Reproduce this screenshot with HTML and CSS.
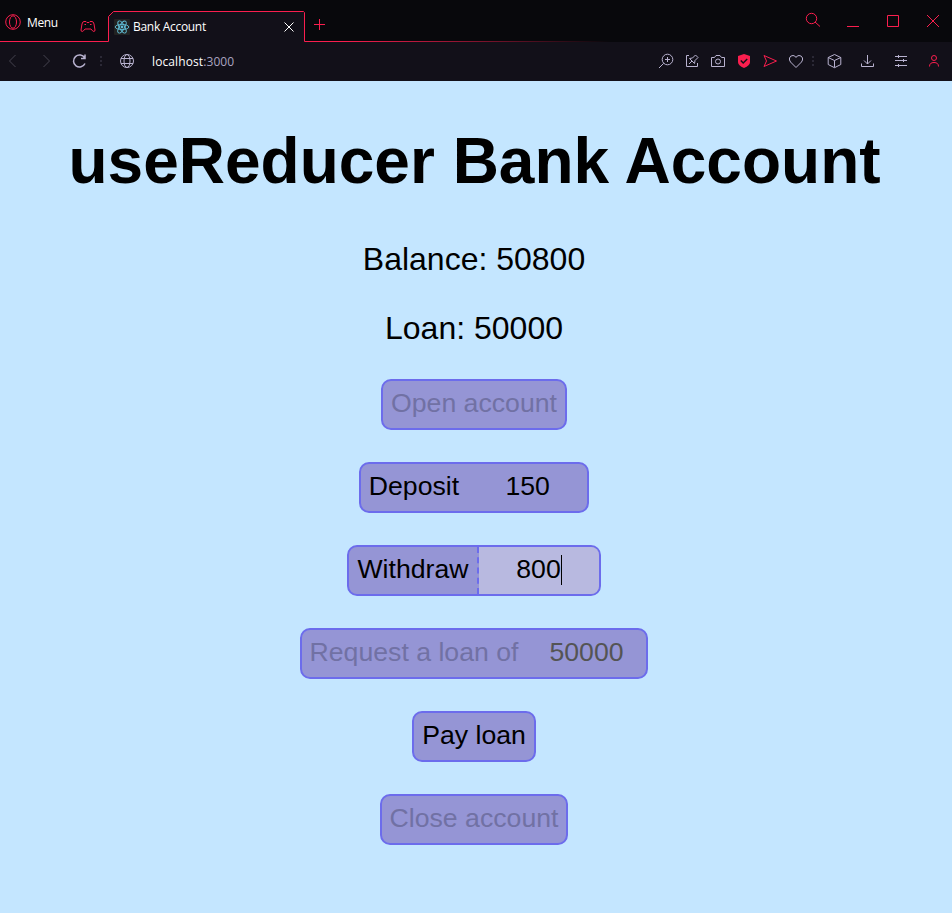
FILE: index.html
```html
<!DOCTYPE html>
<html lang="en">
<head>
<meta charset="utf-8">
<title>Bank Account</title>
<link rel="stylesheet" href="styles.css">
</head>
<body>
<header class="browser">
  <div class="tabbar">
    <svg class="outline" width="952" height="42" viewBox="0 0 952 42"><defs><linearGradient id="fade" gradientUnits="userSpaceOnUse" x1="0" x2="952" y1="0" y2="0"><stop offset="0" stop-color="#fa1e4e"/><stop offset=".36" stop-color="#fa1e4e"/><stop offset=".64" stop-color="#fa1e4e" stop-opacity="0"/></linearGradient></defs><path d="M108.500 42V16.500L113.500 11.500H303.500L304.500 12.500V42Z" fill="#121019"/><path d="M0 41.500H108.500V16.500L113.500 11.500H303.500L304.500 12.500V41.500H952" fill="none" stroke="url(#fade)"/></svg>
    <div class="menu">
      <svg class="red" width="16" height="16" viewBox="0 0 16 16"><circle cx="8" cy="8" r="7.300"/><ellipse cx="8" cy="8" rx="3.500" ry="6.200"/></svg>
      <span class="menu-label">Menu</span>
      <svg class="red pad" width="16" height="13" viewBox="0 0 16 13"><path d="M4 1.500H6L7 2.500H9L10 1.500H12Q13.500 1.500 14 4L15 10Q15 11.500 13.800 11.500Q12.800 11.500 11 9H5Q3.200 11.500 2.200 11.500Q1 11.500 1 10L2 4Q2.500 1.500 4 1.500ZM4.500 4.500H6M10 4.500H11.500"/></svg>
    </div>
    <div class="tab">
      <svg class="react" width="16" height="16" viewBox="0 0 16 16"><rect width="16" height="16" rx="1" fill="#222"/><g fill="none" stroke="#61bfd8" stroke-width=".9"><ellipse cx="8" cy="8" rx="6.800" ry="2.600"/><ellipse cx="8" cy="8" rx="6.800" ry="2.600" transform="rotate(60 8 8)"/><ellipse cx="8" cy="8" rx="6.800" ry="2.600" transform="rotate(120 8 8)"/></g><circle cx="8" cy="8" r="1.400" fill="#61bfd8"/></svg>
      <span class="tab-title">Bank Account</span>
      <svg class="tab-close" width="10" height="10" viewBox="0 0 10 10"><path d="M.5 .5L9.500 9.500M9.500 .5L.5 9.500"/></svg>
    </div>
    <svg class="red plus" width="11" height="11" viewBox="0 0 11 11"><path d="M5.500 0V11M0 5.500H11"/></svg>
    <div class="window">
      <svg class="red search" width="16" height="16" viewBox="0 0 16 16"><circle cx="6.500" cy="6.500" r="5.200"/><path d="M10 10L15 14.500"/></svg>
      <svg class="red" width="14" height="14" viewBox="0 0 14 14"><path d="M0 12.500H12"/></svg>
      <svg class="red" width="14" height="14" viewBox="0 0 14 14"><path d="M1.500 1.500H12.500V12.500H1.500Z"/></svg>
      <svg class="red" width="14" height="14" viewBox="0 0 14 14"><path d="M1 1L13 13M13 1L1 13"/></svg>
    </div>
  </div>
  <div class="toolbar">
    <div class="nav">
      <svg class="dim" width="16" height="16" viewBox="0 0 16 16"><path d="M10.500 2L4.500 8L10.500 14"/></svg>
      <svg class="dim" width="16" height="16" viewBox="0 0 16 16"><path d="M5.500 2L11.500 8L5.500 14"/></svg>
      <svg class="reload" width="16" height="16" viewBox="0 0 16 16"><path d="M13.700 5A6 6 0 1 0 14 10.500M14 1.500V5.500H10"/></svg>
    </div>
    <div class="dots"></div>
    <svg class="globe" width="16" height="16" viewBox="0 0 16 16"><circle cx="8" cy="8" r="6.500"/><ellipse cx="8" cy="8" rx="3" ry="6.500"/><path d="M2 5.500H14M2 10.500H14"/></svg>
    <div class="url">localhost<span class="port">:3000</span></div>
    <div class="tools">
      <svg width="16" height="16" viewBox="0 0 16 16"><circle cx="9.500" cy="6.500" r="5.300"/><path d="M5.700 10.300L1 15M9.500 4V9M7 6.500H12"/></svg>
      <svg width="16" height="16" viewBox="0 0 16 16"><path d="M5 2.500H2.500V13.500H13.500V10M5 11L8 8M5.500 5.500L10.500 10.500L11 7.500L14 4.500L11.500 2L8.500 5Z"/></svg>
      <svg width="16" height="16" viewBox="0 0 16 16"><path d="M1.500 4.500H4.500L6 2.500H10L11.500 4.500H14.500V13.500H1.500Z"/><circle cx="8" cy="8.500" r="2.500"/></svg>
      <svg width="16" height="16" viewBox="0 0 16 16"><path d="M8 1L14 3V9Q14 12.500 8 15Q2 12.500 2 9V3Z" fill="#fa1e4e" stroke="none"/><path d="M4.800 7.500L7.200 10L11.200 6" stroke="#121019" stroke-width="1.500"/></svg>
      <svg class="red" width="16" height="16" viewBox="0 0 16 16"><path d="M2 2.500L14.500 8L2 13.500L4.500 8Z"/></svg>
      <svg width="16" height="16" viewBox="0 0 16 16"><path d="M8 14.500L2.500 9Q1 7 1.500 5Q2.300 2.500 5 2.500Q7 2.500 8 4.500Q9 2.500 11 2.500Q13.700 2.500 14.500 5Q15 7 13.500 9Z"/></svg>
    </div>
    <div class="dots"></div>
    <div class="panels">
      <svg width="16" height="16" viewBox="0 0 16 16"><path d="M7.500 1.500L13.800 4.500V11.500L7.500 14.700L1.200 11.500V4.500ZM1.200 4.500L7.500 7.500L13.800 4.500M7.500 7.500V14.500"/></svg>
      <svg width="16" height="16" viewBox="0 0 16 16"><path d="M7.500 2V11M4 7.500L7.500 11L11 7.500M1.500 10.500V13.500H13.500V10.500"/></svg>
      <svg width="16" height="16" viewBox="0 0 16 16"><path d="M2 3.500H14M2 7.500H14M2 12.500H14M5.500 2V5M10.500 6V9M5.500 11V14"/></svg>
      <svg class="red" width="16" height="16" viewBox="0 0 16 16"><circle cx="8" cy="5" r="2.500"/><path d="M3.500 13.500Q3.500 9.500 8 9.500Q12.500 9.500 12.500 13.500"/></svg>
    </div>
  </div>
</header>
<main class="app">
  <h1>useReducer Bank Account</h1>
  <p>Balance: 50800</p>
  <p>Loan: 50000</p>
  <div class="actions">
    <div class="control"><button disabled>Open account</button></div>
    <div class="control"><button>Deposit</button><input value="150"></div>
    <div class="control editing"><button>Withdraw</button><div class="field">800<span class="caret"></span></div></div>
    <div class="control"><button disabled>Request a loan of</button><input value="50000" disabled></div>
    <div class="control"><button>Pay loan</button></div>
    <div class="control"><button disabled>Close account</button></div>
  </div>
</main>
</body>
</html>
```
FILE: styles.css
```css
* { box-sizing: border-box; }
body { margin: 0; background: #c4e6ff; color: #000; font-family: Arial, "Liberation Sans", sans-serif; }
svg { display: block; flex: none; fill: none; stroke: #b9b3d0; }
svg.red { stroke: #fa1e4e; }

.browser { height: 81px; background: #121019; color: #fff; font: 12px "Open Sans", sans-serif; }
.tabbar { position: relative; display: flex; height: 42px; background: #08080c; }
.outline { position: absolute; left: 0; top: 0; stroke: none; }
.menu, .tab, .plus, .window { position: relative; }
.menu { display: flex; align-items: center; width: 108px; height: 42px; padding: 2px 0 0 5px; }
.menu-label { width: 53px; margin-left: 6px; padding-top: 2px; letter-spacing: -0.4px; }
.pad { margin-top: 8px; }
.tab { display: flex; align-items: center; width: 197px; padding: 11px 0 0 6px; }
.react { stroke: none; }
.tab-title { width: 151px; margin-left: 3px; letter-spacing: -0.3px; white-space: nowrap; }
.tab-close { stroke: #fff; }
.menu-label, .tab-title, .url { line-height: 16px; }
.plus { margin: 19px 0 0 9px; }
.window { display: flex; justify-content: space-between; align-items: center; width: 135px; height: 42px; margin-left: auto; margin-right: 12px; }
.search { margin-top: -2px; }

.toolbar { display: flex; align-items: center; height: 39px; padding-bottom: 1px; }
.nav { display: flex; gap: 17px; padding-left: 5px; }
.dim { stroke: #45434f; }
.reload { stroke-width: 1.5; }
.dots { width: 2px; height: 10px; margin-left: 13px; background: repeating-linear-gradient(#2b2936 0 2px, transparent 2px 4px); }
.globe { margin-left: 17px; }
.url { margin-left: 17px; padding-top: 2px; letter-spacing: 0.1px; }
.port { color: #aaa4c0; }
.tools { display: flex; gap: 10px; margin-left: auto; }
.tools + .dots { margin-left: 8px; }
.panels { display: flex; gap: 17px; margin: 0 10px 0 13px; }

.app { padding: 43px 4px 0 0; text-align: center; }
h1 { margin: 0 -1px 0 0; font-size: 64px; line-height: 74px; }
p { margin: 32px 0 0; font-size: 32px; line-height: 37px; }
h1 + p { margin-top: 43px; }
.actions { display: flex; flex-direction: column; align-items: center; gap: 32px; margin-top: 32px; }
.control { display: flex; height: 51px; overflow: hidden; border: 2px solid #6c6cec; border-radius: 10px; background: #9595d5; }
button, input, .field { margin: 0; border: 0; border-radius: 0; background: none; color: #000; font: 26.667px Arial, "Liberation Sans", sans-serif; }
button { padding: 0 8px 2px; white-space: nowrap; }
button:disabled { color: #7171a4; }
input, .field { width: 120px; padding: 0 0 2px 1px; text-align: center; }
input:disabled { padding-left: 0; color: #545454; }
.editing button { border-right: 2px dashed #6c6cec; }
.field { display: flex; align-items: center; justify-content: center; background: #b8b9e0; }
.caret { width: 1px; height: 30px; background: #000; }
```
